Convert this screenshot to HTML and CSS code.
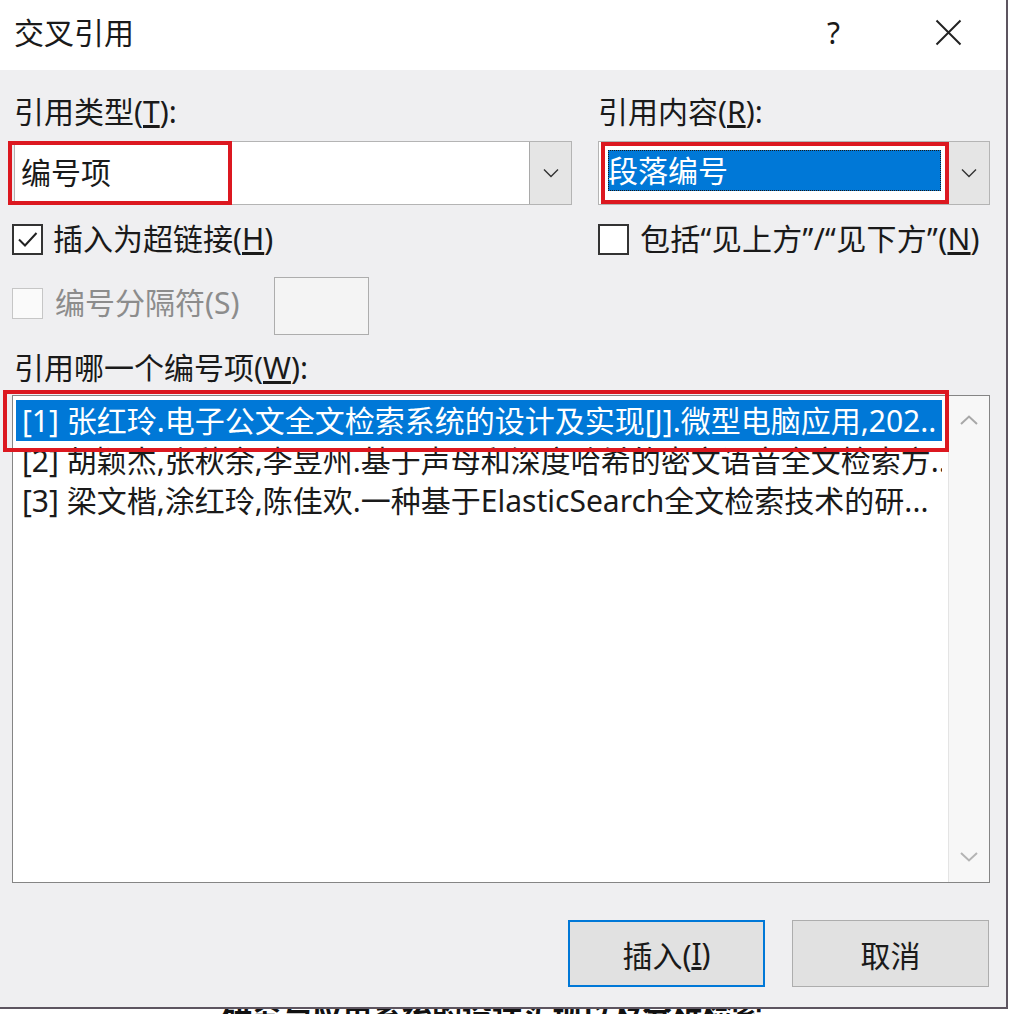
FILE: index.html
```html
<!DOCTYPE html>
<html lang="zh-CN">
<head>
<meta charset="utf-8">
<title>交叉引用</title>
<link rel="stylesheet" href="styles.css">
</head>
<body>
<div class="screen">
  <div class="window">
    <div class="titlebar">
      <span class="title">交叉引用</span>
      <span class="help">?</span>
      <span class="close"><svg width="27" height="27" viewBox="0 0 27 27"><path d="M1.5 1.5L25.5 25.5M25.5 1.5L1.5 25.5" stroke="#222" stroke-width="2" fill="none"/></svg></span>
    </div>
    <div class="content">
      <div class="grid labels">
        <div class="label">引用类型(<u>T</u>):</div>
        <div class="label">引用内容(<u>R</u>):</div>
      </div>
      <div class="grid combos">
        <div class="combo">
          <div class="combo-field">编号项</div>
          <div class="drop"><svg width="16" height="10" viewBox="0 0 16 10"><path d="M1 1.5L8 8.5L15 1.5" fill="none" stroke="#333" stroke-width="1.4"/></svg></div>
        </div>
        <div class="combo">
          <div class="combo-field focus"><div class="sel">段落编号</div></div>
          <div class="drop"><svg width="16" height="10" viewBox="0 0 16 10"><path d="M1 1.5L8 8.5L15 1.5" fill="none" stroke="#333" stroke-width="1.4"/></svg></div>
        </div>
      </div>
      <div class="grid checks">
        <div class="check">
          <span class="box first"><svg width="27" height="27" viewBox="0 0 27 27"><path d="M5 13.5L11 19.5L22.5 7" fill="none" stroke="#222" stroke-width="2"/></svg></span>
          <span>插入为超链接(<u>H</u>)</span>
        </div>
        <div class="check">
          <span class="box right"></span>
          <span class="wide">包括“见上方”/“见下方”(<u>N</u>)</span>
        </div>
      </div>
      <div class="sep-row">
        <span class="box disabled"></span>
        <span class="sep-label">编号分隔符(S)</span>
        <span class="sep-input"></span>
      </div>
      <div class="label label-w">引用哪一个编号项(<u>W</u>):</div>
      <div class="listbox">
        <div class="items">
          <div class="item selected">[1] 张红玲.电子公文全文检索系统的设计及实现[J].微型电脑应用,202..</div>
          <div class="item">[2] 胡颖杰,张秋余,李昱州.基于声母和深度哈希的密文语音全文检索方..</div>
          <div class="item">[3] 梁文楷,涂红玲,陈佳欢.一种基于ElasticSearch全文检索技术的研...</div>
        </div>
        <div class="scroll">
          <svg width="18" height="10" viewBox="0 0 18 10"><path d="M1 9L9 1.5L17 9" fill="none" stroke="#a8a8a8" stroke-width="2"/></svg>
          <svg width="18" height="10" viewBox="0 0 18 10"><path d="M1 1L9 8.5L17 1" fill="none" stroke="#b4b4b4" stroke-width="2"/></svg>
        </div>
      </div>
      <div class="buttons">
        <div class="btn primary">插入(<u>I</u>)</div>
        <div class="btn">取消</div>
      </div>
    </div>
    <div class="mark m1"></div>
    <div class="mark m2"></div>
    <div class="mark m3"></div>
  </div>
  <div class="behind"><span>研究与应用系统的设计实现以及分析检索</span></div>
</div>
</body>
</html>
```

FILE: styles.css
```css
* { box-sizing: border-box; }

body {
  margin: 0;
  background: #ffffff;
  font-family: "Noto Sans", "Noto Sans CJK SC", sans-serif;
  color: #1a1a1a;
}

.screen {
  width: 1010px;
  height: 1014px;
  overflow: hidden;
}

.window {
  position: relative;
  width: 1008px;
  height: 1009px;
  background: #efeff1;
  border-right: 2px solid #5d5560;
  border-bottom: 2px solid #5d5560;
}

.titlebar {
  height: 70px;
  background: #ffffff;
  display: flex;
  align-items: flex-start;
  padding: 13px 44px 0 14px;
}

.title {
  flex: 1;
  font-size: 30px;
  line-height: 40px;
}

.help {
  font-size: 30px;
  line-height: 40px;
  font-weight: 400;
  margin-right: 95px;
  color: #1a1a1a;
}

.close {
  display: flex;
  padding-top: 6px;
}

.content {
  padding: 0 16px 0 14px;
}

.grid {
  display: grid;
  grid-template-columns: 558px 392px;
  column-gap: 26px;
}

.label {
  font-size: 30px;
  line-height: 40px;
}

.labels { margin-top: 22px; }

.combos { margin-top: 9px; }

.combo {
  height: 64px;
  display: flex;
  background: #ffffff;
  border: 1px solid #b4b4b4;
}

.combo-field {
  flex: 1;
  font-size: 30px;
  line-height: 62px;
  padding-left: 6px;
}

.combo-field.focus {
  padding: 8px 6px 13px 9px;
}

.sel {
  height: 100%;
  background: #0078d7;
  color: #ffffff;
  line-height: 41px;
  outline: 1px dotted #1a1a1a;
  outline-offset: -1px;
}

.drop {
  width: 42px;
  background: #e5e5e5;
  border-left: 1px solid #a9a9a9;
  display: flex;
  align-items: center;
  justify-content: center;
}

.checks {
  margin-top: 14px;
  height: 40px;
}

.check {
  display: flex;
  align-items: center;
  font-size: 30px;
  line-height: 40px;
}

.wide { letter-spacing: 0.3px; }

.box {
  width: 31px;
  height: 31px;
  border: 2px solid #333333;
  background: #ffffff;
  flex: none;
  display: flex;
}

.box.first {
  margin-left: -2px;
  margin-right: 10px;
}

.box.right {
  margin-right: 11px;
}

.sep-row {
  margin-top: 18px;
  height: 58px;
  display: flex;
  align-items: flex-start;
}

.box.disabled {
  border: 1px solid #c6c6c6;
  background: #fafafa;
  margin-top: 11px;
  margin-left: -2px;
  margin-right: 12px;
}

.sep-label {
  width: 219px;
  color: #8c8c8c;
  font-size: 30px;
  line-height: 30px;
  margin-top: 11px;
}

.sep-input {
  width: 95px;
  height: 58px;
  border: 1px solid #adadad;
  background: #f4f4f4;
}

.label-w { margin-top: 13px; }

.listbox {
  margin: 7px 0 0 -2px;
  height: 488px;
  border: 1px solid #858585;
  background: #ffffff;
  display: flex;
}

.items {
  flex: 1;
  min-width: 0;
  padding: 4px 6px 0 3px;
}

.item {
  height: 40px;
  line-height: 40px;
  font-size: 30px;
  padding-left: 6px;
  white-space: nowrap;
  overflow: hidden;
}

.item.selected {
  height: 41px;
  line-height: 41px;
  background: #0078d7;
  color: #ffffff;
}

.scroll {
  width: 41px;
  background: #f7f7f7;
  border-left: 1px solid #e4e4e4;
  display: flex;
  flex-direction: column;
  justify-content: space-between;
  align-items: center;
  padding: 19px 0 20px;
}

.buttons {
  margin-top: 37px;
  display: flex;
  justify-content: flex-end;
  gap: 27px;
  padding-right: 1px;
}

.btn {
  width: 197px;
  height: 67px;
  background: #e1e1e1;
  border: 1px solid #adadad;
  font-size: 30px;
  display: flex;
  align-items: center;
  justify-content: center;
  color: #1a1a1a;
}

.btn.primary {
  border: 2px solid #0078d7;
}

.mark {
  position: absolute;
  border: 4px solid #dc1820;
  pointer-events: none;
}

.m1 { left: 8px; top: 141px; width: 224px; height: 64px; }
.m2 { left: 601px; top: 142px; width: 348px; height: 62px; }
.m3 { left: 3px; top: 390px; width: 946px; height: 62px; }

.behind {
  height: 5px;
  overflow: hidden;
  padding-left: 222px;
}

.behind span {
  display: block;
  font-family: "Noto Sans CJK SC", sans-serif;
  font-size: 30px;
  font-weight: 700;
  line-height: 5px;
  color: #111111;
  white-space: nowrap;
}
```
